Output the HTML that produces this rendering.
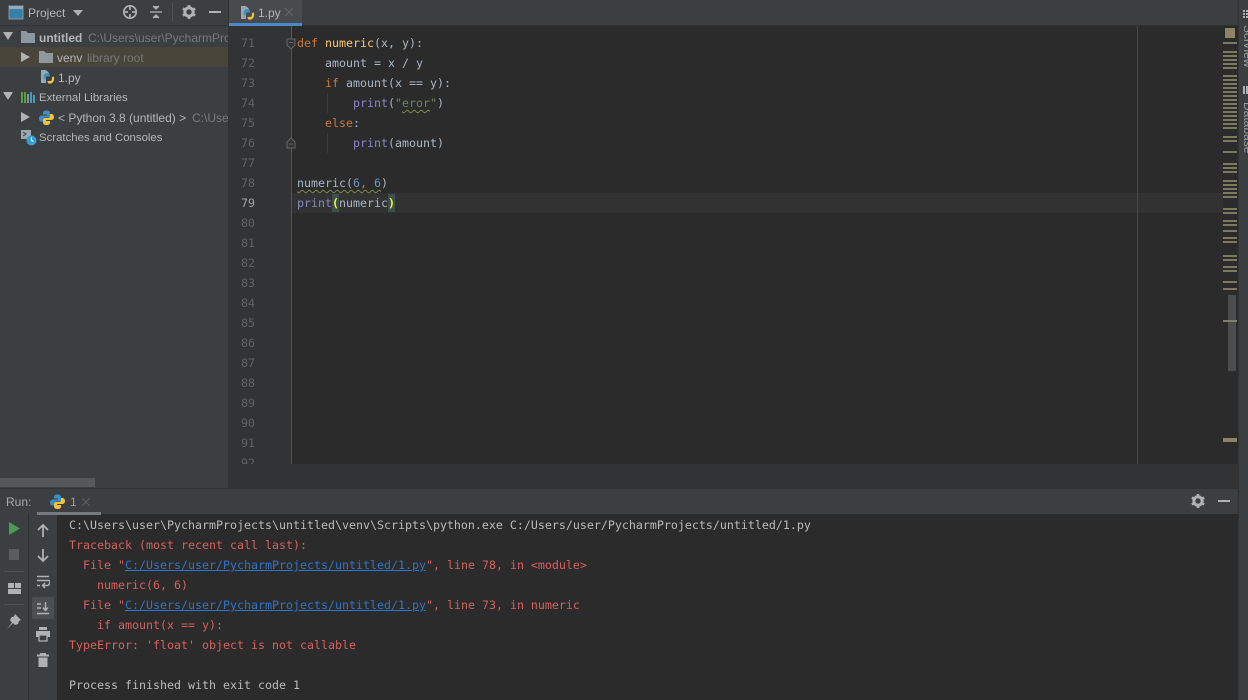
<!DOCTYPE html>
<html><head><meta charset="utf-8"><style>
html,body{margin:0;padding:0;width:1248px;height:700px;overflow:hidden;background:#3c3f41}
body{filter:blur(.3px)}
div,span,svg{box-sizing:border-box}
.a{position:absolute}
.s{position:absolute;font:12px/20px "Liberation Sans",sans-serif;color:#b4b6b8;white-space:pre}
.m{position:absolute;font:11.63px/20px "DejaVu Sans Mono",monospace;white-space:pre;color:#a9b7c6}
.ln{position:absolute;left:229px;width:26px;text-align:right;font:11.63px/20px "DejaVu Sans Mono",monospace;color:#606366}
.k{color:#cc7832}.f{color:#ffc66d}.b{color:#8888c6}.st{color:#6a8759}.n{color:#6897bb}
.r{color:#d9605d}.l{color:#2f74c8;text-decoration:underline}
.w{text-decoration:underline wavy #7f8a4a 1px;text-underline-offset:2px}
</style></head><body>
<!-- backgrounds -->
<div class="a" style="left:0;top:0;width:1248px;height:25px;background:#3c3f41"></div>
<div class="a" style="left:0;top:25px;width:1248px;height:1px;background:#323232"></div>
<div class="a" style="left:229px;top:26px;width:63px;height:438px;background:#313335"></div>
<div class="a" style="left:292px;top:26px;width:946px;height:438px;background:#2b2b2b"></div>
<div class="a" style="left:292px;top:193px;width:931px;height:20px;background:#323232"></div>
<div class="a" style="left:291px;top:26px;width:1px;height:438px;background:#555"></div>
<div class="a" style="left:1137px;top:26px;width:1px;height:438px;background:#484848"></div>
<div class="a" style="left:228px;top:0;width:1px;height:488px;background:#323232"></div>
<div class="a" style="left:229px;top:464px;width:1009px;height:24px;background:#313335"></div>
<div class="a" style="left:0;top:488px;width:1248px;height:26px;background:#3c3f41;border-top:1px solid #323232"></div>
<div class="a" style="left:0;top:514px;width:1248px;height:186px;background:#3c3f41"></div>
<div class="a" style="left:57px;top:514px;width:1181px;height:186px;background:#2b2b2b"></div>
<div class="a" style="left:28px;top:514px;width:1px;height:186px;background:#323232"></div>
<div class="a" style="left:1238px;top:0;width:10px;height:700px;background:#3c3f41;border-left:1px solid #323232"></div>
<div class="a" style="left:0;top:478px;width:95px;height:9px;background:#565859"></div>

<!-- top bar project -->
<svg class="a" style="left:8px;top:5px" width="16" height="16"><rect x="1" y="1" width="14" height="13" fill="#3592c4" opacity=".8" stroke="#9aa7b0"/><rect x="1" y="1" width="14" height="3" fill="#9aa7b0"/></svg>
<div class="s" style="left:28px;top:3px">Project</div>
<svg class="a" style="left:73px;top:10px" width="10" height="6"><path d="M0 0h10L5 6z" fill="#afb1b3"/></svg>
<svg class="a" style="left:122px;top:4px" width="16" height="16" fill="none" stroke="#afb1b3"><circle cx="8" cy="8" r="6.200" stroke-width="1.700"/><path d="M8 2v4M8 10v4M2 8h4M10 8h4" stroke-width="1.700"/></svg>
<svg class="a" style="left:149px;top:4px" width="14" height="16" fill="none" stroke="#afb1b3" stroke-width="1.300"><path d="M1 8h12"/><path d="M4 2l3 3 3-3M4 14l3-3 3 3" fill="#afb1b3"/></svg>
<div class="a" style="left:172px;top:3px;width:1px;height:18px;background:#515151"></div>
<svg class="a" style="left:181px;top:4px" width="16" height="16"><circle cx="8" cy="8" r="4.200" fill="none" stroke="#afb1b3" stroke-width="3"/><path d="M8 1v3M8 12v3M1.900 4.500l2.600 1.500M11.500 10l2.600 1.500M1.900 11.500l2.600-1.500M11.500 6l2.600-1.500" stroke="#afb1b3" stroke-width="2.600"/></svg>
<div class="a" style="left:209px;top:11px;width:12px;height:2px;background:#afb1b3"></div>

<!-- tab -->
<div class="a" style="left:229px;top:0;width:73px;height:23px;background:#484b4d"></div>
<div class="a" style="left:229px;top:23px;width:73px;height:3px;background:#4a88c7"></div>
<svg class="a" style="left:240px;top:5px" width="15" height="16"><use href="#pyf"/></svg>
<div class="s" style="left:258px;top:3px">1.py</div>
<svg class="a" style="left:285px;top:8px" width="8" height="8" stroke="#65686a" stroke-width="1"><path d="M0 0l8 8M8 0L0 8"/></svg>

<svg width="0" height="0" style="position:absolute"><defs>
<g id="pyf"><path d="M1 1h5l3 3v3H6v7H1z" fill="#9aa7b0"/><path d="M5.500 4.500c3.500-1 4.500 0 4.500 3H7.500C5.800 7.500 5.500 9 5.500 11L4 10c-1-3 0-5 1.500-5.500z" fill="#3f8fc4"/><path d="M14 7.500c.5 4-.5 6-3 7-2 .5-3.500 0-3.500-2.500H10c1.500 0 2-1 2-4z" fill="#f0c33c"/></g>
<g id="py"><path d="M7.500.5C4.500.5 4 1.800 4 3v1.500h4V5.500H2.500C1 5.500 0 7 0 8.500s1 3 2.300 3H4V9.500C4 8.300 5 7.500 6 7.500h3.500C10.500 7.500 11 6.500 11 5.500V3C11 1.500 9.500.5 7.500.5z" fill="#3f8fc4"/><path d="M7.500 15c3 0 3.500-1.300 3.500-2.500V11H7v-1h5.500c1.500 0 2.500-1.500 2.500-3s-1-3-2.300-3H11v2c0 1.200-1 2-2 2H5.500C4.500 8 4 9 4 10v2.500C4 14 5.500 15 7.500 15z" fill="#f0c33c"/></g>
</defs></svg>

<!-- tree -->
<svg class="a" style="left:3px;top:31px" width="10" height="10"><path d="M0 1h10L5 9z" fill="#afb1b3"/></svg>
<svg class="a" style="left:20px;top:30px" width="16" height="14"><path d="M1 1h5l2 2h7v10H1z" fill="#9aa7b0" opacity=".85"/></svg>
<div class="s" style="left:39px;top:28px;font-weight:bold">untitled</div>
<div class="s" style="left:88px;top:28px;color:#787878;width:140px;overflow:hidden">C:\Users\user\PycharmProjects</div>
<div class="a" style="left:0;top:47px;width:228px;height:20px;background:#4a453a"></div>
<svg class="a" style="left:21px;top:52px" width="9" height="10"><path d="M0 0l9 5-9 5z" fill="#afb1b3"/></svg>
<svg class="a" style="left:38px;top:50px" width="16" height="14"><path d="M1 1h5l2 2h7v10H1z" fill="#9aa7b0" opacity=".85"/></svg>
<div class="s" style="left:57px;top:48px">venv</div>
<div class="s" style="left:87px;top:48px;color:#787878">library root</div>
<svg class="a" style="left:40px;top:69px" width="15" height="16"><use href="#pyf"/></svg>
<div class="s" style="left:58px;top:68px">1.py</div>
<svg class="a" style="left:3px;top:91px" width="10" height="10"><path d="M0 1h10L5 9z" fill="#afb1b3"/></svg>
<svg class="a" style="left:21px;top:91px" width="15" height="13"><path d="M1 1v11M4 1v11" stroke="#62b543" stroke-width="1.600"/><path d="M7 3v9" stroke="#9aa7b0" stroke-width="1.600"/><path d="M10 1v11M13 4v8" stroke="#40b6e0" stroke-width="1.600"/></svg>
<div class="s" style="left:39px;top:88px;font-size:11.4px">External Libraries</div>
<svg class="a" style="left:21px;top:112px" width="9" height="10"><path d="M0 0l9 5-9 5z" fill="#afb1b3"/></svg>
<svg class="a" style="left:39px;top:110px" width="15" height="15"><use href="#py"/></svg>
<div class="s" style="left:58px;top:108px">&lt; Python 3.8 (untitled) &gt;</div>
<div class="s" style="left:192px;top:108px;color:#787878;width:36px;overflow:hidden">C:\Users</div>
<svg class="a" style="left:21px;top:130px" width="16" height="16"><rect x="0" y="0" width="10" height="9" fill="#9aa7b0"/><path d="M2 2l3 2-3 2" stroke="#3c3f41" fill="none"/><circle cx="10.500" cy="10.500" r="5" fill="#389fd6"/><path d="M10.500 7.500v3l2 1" stroke="#fff" fill="none"/></svg>
<div class="s" style="left:39px;top:128px;font-size:11.4px">Scratches and Consoles</div>

<!-- line numbers -->
<div class="ln" style="top:33px">71</div><div class="ln" style="top:53px">72</div><div class="ln" style="top:73px">73</div><div class="ln" style="top:93px">74</div><div class="ln" style="top:113px">75</div><div class="ln" style="top:133px">76</div><div class="ln" style="top:153px">77</div><div class="ln" style="top:173px">78</div><div class="ln" style="top:193px;color:#a4a3a3">79</div><div class="ln" style="top:213px">80</div><div class="ln" style="top:233px">81</div><div class="ln" style="top:253px">82</div><div class="ln" style="top:273px">83</div><div class="ln" style="top:293px">84</div><div class="ln" style="top:313px">85</div><div class="ln" style="top:333px">86</div><div class="ln" style="top:353px">87</div><div class="ln" style="top:373px">88</div><div class="ln" style="top:393px">89</div><div class="ln" style="top:413px">90</div><div class="ln" style="top:433px">91</div>
<div class="a" style="left:229px;top:453px;width:62px;height:11px;overflow:hidden"><div class="ln" style="left:0;top:0">92</div></div>
<!-- fold markers -->
<svg class="a" style="left:286px;top:38px" width="11" height="12" fill="#313335" stroke="#666"><path d="M1 1h8v6l-4 4-4-4z"/><path d="M3 4.500h4"/></svg>
<svg class="a" style="left:286px;top:137px" width="11" height="12" fill="#313335" stroke="#666"><path d="M1 11h8V5L5 1 1 5z"/><path d="M3 7h4"/></svg>
<!-- indent guides -->
<div class="a" style="left:327px;top:93px;width:1px;height:20px;background:#3b3b3b"></div>
<div class="a" style="left:327px;top:133px;width:1px;height:20px;background:#3b3b3b"></div>

<!-- code -->
<div class="m" style="left:297px;top:33px"><span class="k">def</span> <span class="f">numeric</span>(x, y):</div>
<div class="m" style="left:297px;top:53px">    amount = x / y</div>
<div class="m" style="left:297px;top:73px">    <span class="k">if</span> amount(x == y):</div>
<div class="m" style="left:297px;top:93px">        <span class="b">print</span>(<span class="st">"<span class="w">eror</span>"</span>)</div>
<div class="m" style="left:297px;top:113px">    <span class="k">else</span>:</div>
<div class="m" style="left:297px;top:133px">        <span class="b">print</span>(amount)</div>
<div class="m" style="left:297px;top:173px"><span class="w">numeric(<span class="n">6</span><span class="k">,</span> <span class="n">6</span></span>)</div>
<div class="a" style="left:332px;top:194px;width:7px;height:18px;background:#3b514d"></div>
<div class="a" style="left:388px;top:194px;width:7px;height:18px;background:#3b514d"></div>
<div class="m" style="left:297px;top:193px"><span class="b">print</span><span style="color:#ffef28;font-weight:bold">(</span>numeric<span style="color:#ffef28;font-weight:bold">)</span></div>

<!-- error stripe -->
<svg class="a" style="left:1223px;top:26px" width="15" height="438">
<rect x="0" y="0" width="15" height="438" fill="#2b2b2b"/>
<rect x="2" y="2" width="10" height="10" fill="#8d8468"/>
<rect x="5" y="269" width="8" height="76" fill="#4d4d4d"/>
<g fill="#7d7960"><rect y="16" width="14" height="2"/><rect y="25" width="14" height="2"/><rect y="29" width="14" height="2"/><rect y="33" width="14" height="2"/><rect y="37" width="14" height="2"/><rect y="41" width="14" height="2"/><rect y="49" width="14" height="2"/><rect y="53" width="14" height="2"/><rect y="57" width="14" height="2"/><rect y="61" width="14" height="2"/><rect y="65" width="14" height="2"/><rect y="69" width="14" height="2"/><rect y="73" width="14" height="2"/><rect y="77" width="14" height="2"/><rect y="81" width="14" height="2"/><rect y="85" width="14" height="2"/><rect y="89" width="14" height="2"/><rect y="93" width="14" height="2"/><rect y="97" width="14" height="2"/><rect y="101" width="14" height="2"/><rect y="110" width="14" height="2"/><rect y="114" width="14" height="2"/><rect y="125" width="14" height="2"/><rect y="137" width="14" height="2"/><rect y="141" width="14" height="2"/><rect y="145" width="14" height="2"/><rect y="154" width="14" height="2"/><rect y="158" width="14" height="2"/><rect y="162" width="14" height="2"/><rect y="166" width="14" height="2"/><rect y="170" width="14" height="2"/><rect y="182" width="14" height="2"/><rect y="186" width="14" height="2"/><rect y="194" width="14" height="2"/><rect y="198" width="14" height="2"/><rect y="204" width="14" height="2"/><rect y="211" width="14" height="2"/><rect y="215" width="14" height="2"/><rect y="229" width="14" height="2"/><rect y="233" width="14" height="2"/><rect y="240" width="14" height="2"/><rect y="244" width="14" height="2"/><rect y="255" width="14" height="2"/><rect y="262" width="14" height="2"/></g>
<rect y="294" width="14" height="2" fill="#827f6c"/>
<rect y="412" width="14" height="4" fill="#8d8468"/>
</svg>

<!-- right sidebar -->
<svg class="a" style="left:1243px;top:10px" width="5" height="9" fill="#afb1b3"><rect width="2" height="2"/><rect x="3" width="2" height="2"/><rect y="3" width="2" height="2"/><rect x="3" y="3" width="2" height="2"/><rect y="6" width="2" height="2"/><rect x="3" y="6" width="2" height="2"/></svg>
<div class="s" style="left:1245px;top:25px;transform-origin:0 0;transform:rotate(90deg) translate(0,-10px);line-height:14px;color:#9a9c9e">SciView</div>
<svg class="a" style="left:1243px;top:86px" width="5" height="8" fill="#afb1b3"><rect x="0" width="2" height="8"/><rect x="3" width="2" height="8"/></svg>
<div class="s" style="left:1245px;top:102px;transform-origin:0 0;transform:rotate(90deg) translate(0,-10px);line-height:14px;color:#9a9c9e">Database</div>

<!-- bottom right tools -->
<svg class="a" style="left:1190px;top:493px" width="16" height="16"><circle cx="8" cy="8" r="4.200" fill="none" stroke="#afb1b3" stroke-width="3"/><path d="M8 1v3M8 12v3M1.900 4.500l2.600 1.500M11.500 10l2.600 1.500M1.900 11.500l2.600-1.500M11.500 6l2.600-1.500" stroke="#afb1b3" stroke-width="2.600"/></svg>
<div class="a" style="left:1218px;top:500px;width:12px;height:2px;background:#afb1b3"></div>

<!-- run header -->
<div class="s" style="left:6px;top:492px;color:#aaa">Run:</div>
<svg class="a" style="left:50px;top:494px" width="15" height="15"><use href="#py"/></svg>
<div class="s" style="left:70px;top:492px;color:#999">1</div>
<svg class="a" style="left:82px;top:498px" width="8" height="8" stroke="#5f6163" stroke-width="1"><path d="M0 0l8 8M8 0L0 8"/></svg>
<div class="a" style="left:37px;top:512px;width:64px;height:3px;background:#747a80"></div>

<!-- run left tools -->
<svg class="a" style="left:9px;top:522px" width="12" height="13"><path d="M0 0l11 6.500L0 13z" fill="#499c54"/></svg>
<div class="a" style="left:9px;top:549px;width:10px;height:11px;background:#5a5c5e"></div>
<div class="a" style="left:4px;top:571px;width:20px;height:1px;background:#515151"></div>
<svg class="a" style="left:8px;top:583px" width="13" height="11" fill="#afb1b3"><rect x="0" y="0" width="6" height="5"/><rect x="7" y="0" width="6" height="5"/><rect x="0" y="6" width="13" height="5"/></svg>
<div class="a" style="left:4px;top:604px;width:20px;height:1px;background:#515151"></div>
<svg class="a" style="left:6px;top:613px" width="16" height="16" fill="#afb1b3"><path d="M9 1l6 6-2 1-1 3-3 1-2-2-6 6 5-6.500-2-2 1-3 3-1z"/></svg>
<!-- run second column -->
<svg class="a" style="left:37px;top:523px" width="12" height="14" fill="none" stroke="#afb1b3" stroke-width="1.800"><path d="M6 14V2M1 7l5-5 5 5"/></svg>
<svg class="a" style="left:37px;top:549px" width="12" height="14" fill="none" stroke="#afb1b3" stroke-width="1.800"><path d="M6 0v12M1 7l5 5 5-5"/></svg>
<svg class="a" style="left:36px;top:575px" width="14" height="14" fill="none" stroke="#afb1b3" stroke-width="1.500"><path d="M1 1.500h12M1 5.500h12c1.500 0 1 5-2 5H7"/><path d="M9 8l-2.500 2.500L9 13M1 10.500h3"/></svg>
<div class="a" style="left:32px;top:597px;width:22px;height:22px;background:#4c5052;border-radius:2px"></div>
<svg class="a" style="left:36px;top:601px" width="14" height="14" fill="none" stroke="#afb1b3" stroke-width="1.400"><path d="M1 3h4M1 7h4M1 12.500h12M9.500 1v8M7 6.500L9.500 9.500 12 6.500"/></svg>
<svg class="a" style="left:36px;top:627px" width="14" height="15" fill="#afb1b3"><rect x="3" y="0" width="8" height="3"/><rect x="0" y="4" width="14" height="6"/><path d="M3 8h8v6H3z" fill="#3c3f41" stroke="#afb1b3" stroke-width="1.300"/></svg>
<svg class="a" style="left:37px;top:653px" width="12" height="14" fill="#afb1b3"><rect x="3" y="0" width="6" height="1.500"/><rect x="0" y="1.500" width="12" height="2"/><path d="M1.500 4.500h9V14h-9z"/></svg>

<!-- console -->
<div class="m" style="left:69px;top:515px;color:#bbbbbb">C:\Users\user\PycharmProjects\untitled\venv\Scripts\python.exe C:/Users/user/PycharmProjects/untitled/1.py</div>
<div class="m r" style="left:69px;top:535px">Traceback (most recent call last):</div>
<div class="m r" style="left:69px;top:555px">  File "<span class="l">C:/Users/user/PycharmProjects/untitled/1.py</span>", line 78, in &lt;module&gt;</div>
<div class="m r" style="left:69px;top:575px">    numeric(6, 6)</div>
<div class="m r" style="left:69px;top:595px">  File "<span class="l">C:/Users/user/PycharmProjects/untitled/1.py</span>", line 73, in numeric</div>
<div class="m r" style="left:69px;top:615px">    if amount(x == y):</div>
<div class="m r" style="left:69px;top:635px">TypeError: 'float' object is not callable</div>
<div class="m" style="left:69px;top:675px;color:#bbbbbb">Process finished with exit code 1</div>
</body></html>
